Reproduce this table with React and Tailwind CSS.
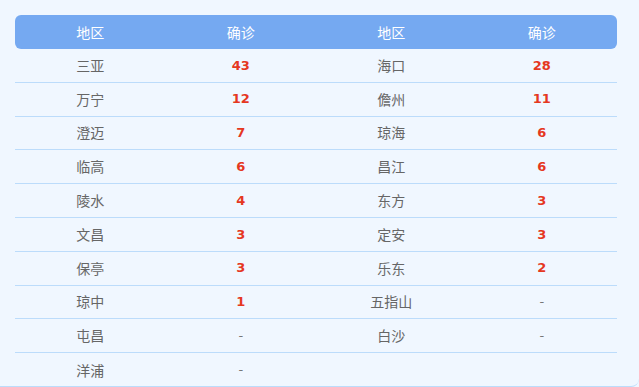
import React from "react";

const left = [
  ["三亚", "43"], ["万宁", "12"], ["澄迈", "7"], ["临高", "6"], ["陵水", "4"],
  ["文昌", "3"], ["保亭", "3"], ["琼中", "1"], ["屯昌", "-"], ["洋浦", "-"],
];
const right = [
  ["海口", "28"], ["儋州", "11"], ["琼海", "6"], ["昌江", "6"], ["东方", "3"],
  ["定安", "3"], ["乐东", "2"], ["五指山", "-"], ["白沙", "-"],
];

const cjk = { fontFamily: '"Noto Sans CJK SC", "Noto Sans", sans-serif' };
const num = { fontFamily: '"DejaVu Sans", Verdana, sans-serif' };

function Row({ name, value, last }) {
  return (
    <div className={`flex h-[33.8px] items-center ${last ? "" : "border-b border-[#bcdcfb]"}`}>
      <div className="flex-1 text-center text-[14px] text-[#666666]" style={cjk}>{name}</div>
      {value === "-" ? (
        <div className="flex-1 text-center text-[13px] text-[#777777]" style={num}>-</div>
      ) : (
        <div className="flex-1 text-center text-[13px] font-bold text-[#e5381f]" style={num}>{value}</div>
      )}
    </div>
  );
}

export default function App() {
  return (
    <div className="h-[387px] w-[639px] overflow-hidden bg-[#f0f7ff]">
      <div className="h-[387px] border-b border-[#bcdcfb] rounded-br-[8px] pt-[15px] pl-[15px] pr-[22px]">
        <div className="flex h-[34px] items-center rounded-[6px] bg-[#75a9f1] text-[14px] text-white" style={cjk}>
          <div className="flex-1 text-center">地区</div>
          <div className="flex-1 text-center">确诊</div>
          <div className="flex-1 text-center">地区</div>
          <div className="flex-1 text-center">确诊</div>
        </div>
        <div className="flex">
          <div className="flex-1">
            {left.map(([n, v], i) => (
              <Row key={n} name={n} value={v} last={i === left.length - 1} />
            ))}
          </div>
          <div className="flex-1">
            {right.map(([n, v]) => (
              <Row key={n} name={n} value={v} />
            ))}
          </div>
        </div>
      </div>
    </div>
  );
}
